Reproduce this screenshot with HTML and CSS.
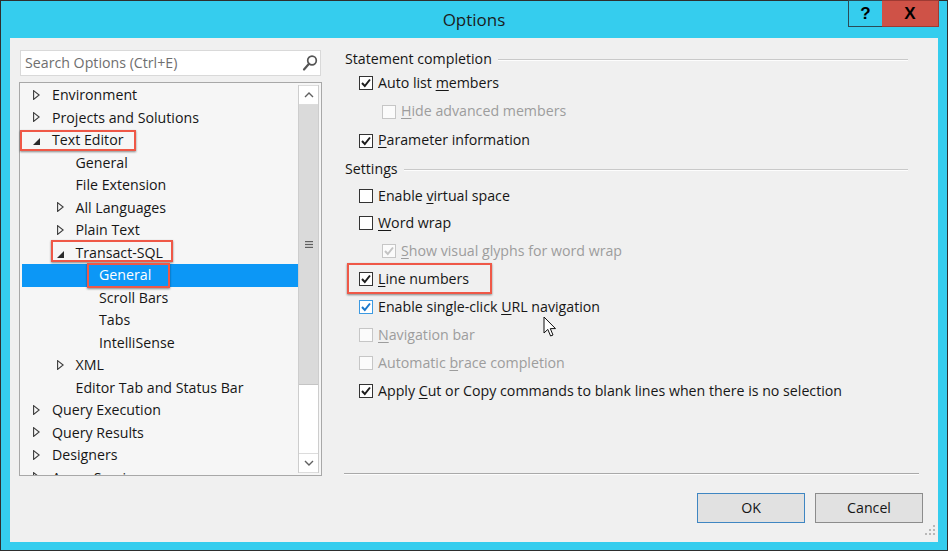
FILE: index.html
```html
<!DOCTYPE html>
<html>
<head>
<meta charset="utf-8">
<link rel="stylesheet" href="styles.css">
</head>
<body>
<div class="window">
  <div class="titlebar">
    <div></div>
    <div class="title">Options</div>
    <div class="controls">
      <div class="tbtn help">?</div>
      <div class="tbtn close">X</div>
    </div>
  </div>
  <div class="client">
    <div class="main">
      <div class="left">
        <div class="search">
          <span class="placeholder">Search Options (Ctrl+E)</span>
          <svg class="mag" width="16" height="18" viewBox="0 0 16 18"><circle cx="10" cy="6.5" r="4.3" fill="none" stroke="#555" stroke-width="1.7"/><line x1="7" y1="9.8" x2="2" y2="15.5" stroke="#555" stroke-width="2.2" stroke-linecap="round"/></svg>
        </div>
        <div class="tree">
          <div class="items">
            <div class="row l0"><span class="arr"><svg width="7" height="10" viewBox="0 0 7 10"><polygon points="0.6,0.6 6.2,5 0.6,9.4" fill="none" stroke="#3a3a3a" stroke-width="1.1"/></svg></span><span>Environment</span></div>
            <div class="row l0"><span class="arr"><svg width="7" height="10" viewBox="0 0 7 10"><polygon points="0.6,0.6 6.2,5 0.6,9.4" fill="none" stroke="#3a3a3a" stroke-width="1.1"/></svg></span><span>Projects and Solutions</span></div>
            <div class="row l0"><span class="arr open"><svg width="7" height="7" viewBox="0 0 7 7"><polygon points="7,0 7,7 0,7" fill="#2a2a2a"/></svg></span><span>Text Editor</span></div>
            <div class="row l1"><span class="arr"></span><span>General</span></div>
            <div class="row l1"><span class="arr"></span><span>File Extension</span></div>
            <div class="row l1"><span class="arr"><svg width="7" height="10" viewBox="0 0 7 10"><polygon points="0.6,0.6 6.2,5 0.6,9.4" fill="none" stroke="#3a3a3a" stroke-width="1.1"/></svg></span><span>All Languages</span></div>
            <div class="row l1"><span class="arr"><svg width="7" height="10" viewBox="0 0 7 10"><polygon points="0.6,0.6 6.2,5 0.6,9.4" fill="none" stroke="#3a3a3a" stroke-width="1.1"/></svg></span><span>Plain Text</span></div>
            <div class="row l1"><span class="arr open"><svg width="7" height="7" viewBox="0 0 7 7"><polygon points="7,0 7,7 0,7" fill="#2a2a2a"/></svg></span><span>Transact-SQL</span></div>
            <div class="row l2 selected"><span class="arr"></span><span>General</span></div>
            <div class="row l2"><span class="arr"></span><span>Scroll Bars</span></div>
            <div class="row l2"><span class="arr"></span><span>Tabs</span></div>
            <div class="row l2"><span class="arr"></span><span>IntelliSense</span></div>
            <div class="row l1"><span class="arr"><svg width="7" height="10" viewBox="0 0 7 10"><polygon points="0.6,0.6 6.2,5 0.6,9.4" fill="none" stroke="#3a3a3a" stroke-width="1.1"/></svg></span><span>XML</span></div>
            <div class="row l1"><span class="arr"></span><span>Editor Tab and Status Bar</span></div>
            <div class="row l0"><span class="arr"><svg width="7" height="10" viewBox="0 0 7 10"><polygon points="0.6,0.6 6.2,5 0.6,9.4" fill="none" stroke="#3a3a3a" stroke-width="1.1"/></svg></span><span>Query Execution</span></div>
            <div class="row l0"><span class="arr"><svg width="7" height="10" viewBox="0 0 7 10"><polygon points="0.6,0.6 6.2,5 0.6,9.4" fill="none" stroke="#3a3a3a" stroke-width="1.1"/></svg></span><span>Query Results</span></div>
            <div class="row l0"><span class="arr"><svg width="7" height="10" viewBox="0 0 7 10"><polygon points="0.6,0.6 6.2,5 0.6,9.4" fill="none" stroke="#3a3a3a" stroke-width="1.1"/></svg></span><span>Designers</span></div>
            <div class="row l0"><span class="arr"><svg width="7" height="10" viewBox="0 0 7 10"><polygon points="0.6,0.6 6.2,5 0.6,9.4" fill="none" stroke="#3a3a3a" stroke-width="1.1"/></svg></span><span>Azure Services</span></div>
          </div>
          <div class="scrollbar">
            <div class="sbtn"><svg width="10" height="6" viewBox="0 0 10 6"><polyline points="1,5 5,1 9,5" fill="none" stroke="#606060" stroke-width="1.4"/></svg></div>
            <div class="thumb"><svg width="8" height="7" viewBox="0 0 8 7"><rect x="0" y="0" width="8" height="1.2" fill="#606060"/><rect x="0" y="2.9" width="8" height="1.2" fill="#606060"/><rect x="0" y="5.8" width="8" height="1.2" fill="#606060"/></svg></div>
            <div class="track"></div>
            <div class="sbtn"><svg width="10" height="6" viewBox="0 0 10 6"><polyline points="1,1 5,5 9,1" fill="none" stroke="#606060" stroke-width="1.4"/></svg></div>
          </div>
        </div>
      </div>
      <div class="right">
        <div class="group g1"><span>Statement completion</span><div class="gline"></div></div>
        <div class="opt h28"><span class="cb"><svg width="12" height="12" viewBox="0 0 12 12"><polyline points="2,6 4.8,9 10,2.5" fill="none" stroke="#1e1e1e" stroke-width="2"/></svg></span><span class="lbl">Auto list <u>m</u>embers</span></div>
        <div class="opt sub dis h29"><span class="cb"></span><span class="lbl"><u>H</u>ide advanced members</span></div>
        <div class="opt h29"><span class="cb"><svg width="12" height="12" viewBox="0 0 12 12"><polyline points="2,6 4.8,9 10,2.5" fill="none" stroke="#1e1e1e" stroke-width="2"/></svg></span><span class="lbl"><u>P</u>arameter information</span></div>
        <div class="group g2"><span>Settings</span><div class="gline"></div></div>
        <div class="opt h26"><span class="cb"></span><span class="lbl">Enable <u>v</u>irtual space</span></div>
        <div class="opt h28"><span class="cb"></span><span class="lbl"><u>W</u>ord wrap</span></div>
        <div class="opt sub dis h28"><span class="cb"><svg width="12" height="12" viewBox="0 0 12 12"><polyline points="2,6 4.8,9 10,2.5" fill="none" stroke="#c4c4c4" stroke-width="2"/></svg></span><span class="lbl"><u>S</u>how visual glyphs for word wrap</span></div>
        <div class="opt h28"><span class="cb"><svg width="12" height="12" viewBox="0 0 12 12"><polyline points="2,6 4.8,9 10,2.5" fill="none" stroke="#1e1e1e" stroke-width="2"/></svg></span><span class="lbl"><u>L</u>ine numbers</span></div>
        <div class="opt h28"><span class="cb hover"><svg width="12" height="12" viewBox="0 0 12 12"><polyline points="2,6 4.8,9 10,2.5" fill="none" stroke="#1b78cc" stroke-width="2"/></svg></span><span class="lbl">Enable single-click <u>U</u>RL navigation</span></div>
        <div class="opt dis h28"><span class="cb"></span><span class="lbl"><u>N</u>avigation bar</span></div>
        <div class="opt dis h28"><span class="cb"></span><span class="lbl">Automatic <u>b</u>race completion</span></div>
        <div class="opt h28"><span class="cb"><svg width="12" height="12" viewBox="0 0 12 12"><polyline points="2,6 4.8,9 10,2.5" fill="none" stroke="#1e1e1e" stroke-width="2"/></svg></span><span class="lbl">Apply <u>C</u>ut or Copy commands to blank lines when there is no selection</span></div>
      </div>
    </div>
    <div class="footer">
      <div class="sep"></div>
      <div class="buttons">
        <div class="btn default">OK</div>
        <div class="btn">Cancel</div>
      </div>
    </div>

    <div class="mark m-texteditor"></div>
    <div class="mark m-tsql"></div>
    <div class="mark m-general"></div>
    <div class="mark m-line"></div>

    <svg class="grip" width="11" height="12" viewBox="0 0 11 12">
      <rect x="8" y="1" width="2" height="2" fill="#b8b8b8"/>
      <rect x="8" y="5" width="2" height="2" fill="#b8b8b8"/>
      <rect x="4" y="5" width="2" height="2" fill="#b8b8b8"/>
      <rect x="8" y="9" width="2" height="2" fill="#b8b8b8"/>
      <rect x="4" y="9" width="2" height="2" fill="#b8b8b8"/>
      <rect x="0" y="9" width="2" height="2" fill="#b8b8b8"/>
    </svg>

    <svg class="cursor" width="14" height="22" viewBox="0 0 14 22">
      <path d="M1,1 L1,17 L4.8,13.4 L7.6,20 L10,19 L7.3,12.6 L12.5,12.6 Z" fill="#fff" stroke="#111" stroke-width="1" stroke-linejoin="round"/>
    </svg>
  </div>
</div>
</body>
</html>
```
FILE: styles.css
```css
* { box-sizing: border-box; }
html, body { margin: 0; padding: 0; }
body {
  width: 948px;
  height: 551px;
  overflow: hidden;
  font-family: "Open Sans", "Noto Sans", "Liberation Sans", sans-serif;
  font-size: 14.2px;
  color: #161616;
}
.window {
  width: 948px;
  height: 551px;
  border: 1px solid #2e2e2e;
  background: #35cdee;
  display: flex;
  flex-direction: column;
}
.titlebar {
  height: 37px;
  display: grid;
  grid-template-columns: 1fr auto 1fr;
  align-items: start;
}
.title {
  line-height: 38px;
  font-size: 17px;
  color: #1c1c1c;
}
.controls {
  justify-self: end;
  display: flex;
  margin-right: 8px;
  margin-top: -1px;
}
.tbtn {
  height: 27px;
  display: flex;
  align-items: center;
  justify-content: center;
  font-family: "Liberation Sans", "DejaVu Sans", sans-serif;
  font-weight: bold;
  font-size: 17px;
  color: #000;
}
.help {
  width: 34px;
  border: 1px solid #2a4a55;
  border-right: none;
}
.close {
  width: 57px;
  background: #cf5247;
  border: 1px solid #9e3a33;
  border-left: none;
}
.client {
  position: relative;
  margin: 0 9px;
  height: 504px;
  background: #f0f0f0;
  display: flex;
  flex-direction: column;
}
.main {
  display: flex;
  height: 435px;
}
.left {
  width: 312px;
  padding: 12px 0 0 9px;
}
.search {
  margin-left: 1px;
  width: 301px;
  height: 26px;
  background: #fff;
  border: 1px solid #d9d9d9;
  display: flex;
  align-items: center;
  justify-content: space-between;
  padding: 0 2px 1px 4px;
  margin-bottom: 6px;
}
.placeholder { color: #6f6f6f; }
.tree {
  width: 303px;
  height: 394px;
  border: 1px solid #a8a8a8;
  background: #f6f6f6;
  display: flex;
  overflow: hidden;
}
.items {
  flex: 1;
  padding: 1px 0 0 2px;
  overflow: hidden;
}
.row {
  height: 22.5px;
  display: flex;
  align-items: center;
  white-space: nowrap;
  padding-bottom: 1px;
}
.row.l0 { padding-left: 11px; }
.row.l1 { padding-left: 34.5px; }
.row.l2 { padding-left: 58px; }
.row.selected {
  background: #0c97f6;
  color: #fff;
}
.arr {
  width: 19px;
  flex: none;
  display: flex;
  align-items: center;
}
.arr.open { padding-top: 4px; }
.scrollbar {
  width: 21px;
  margin: 2px 2px 2px 0;
  display: flex;
  flex-direction: column;
  background: #fff;
  border-left: 1px solid #cdcdcd;
  border-right: 1px solid #cdcdcd;
}
.sbtn {
  height: 20px;
  display: flex;
  align-items: center;
  justify-content: center;
  background: #fff;
  border-top: 1px solid #dcdcdc;
  border-bottom: 1px solid #dcdcdc;
}
.thumb {
  height: 280px;
  background: #dadada;
  border-bottom: 1px solid #c4c4c4;
  display: flex;
  align-items: center;
  justify-content: center;
}
.track { flex: 1; background: #fff; }

.right {
  margin-left: 22px;
  width: 564px;
  padding-top: 11px;
}
.group {
  display: flex;
  align-items: center;
  padding-left: 1px;
  padding-bottom: 1px;
}
.group.g1 { height: 20px; }
.group.g2 { height: 28px; }
.gline {
  flex: 1;
  height: 2px;
  margin-left: 6px;
  margin-top: 2px;
  border-top: 1px solid #c9c9c9;
  border-bottom: 1px solid #fdfdfd;
}
.opt {
  display: flex;
  align-items: center;
  padding-left: 15px;
  white-space: nowrap;
}
.lbl { padding-bottom: 2px; }
.opt.sub { padding-left: 38px; }
.h26 { height: 26px; }
.h28 { height: 28px; }
.h29 { height: 29px; }
.opt.dis { color: #9d9d9d; }
u {
  text-decoration-thickness: 1px;
  text-underline-offset: 2px;
}
.cb {
  width: 14px;
  height: 14px;
  flex: none;
  border: 1px solid #333;
  background: #fff;
  margin-right: 5px;
  display: flex;
  align-items: center;
  justify-content: center;
}
.opt.dis .cb {
  border-color: #c6c6c6;
  background: #fbfbfb;
}
.cb.hover { border-color: #3c9ae2; }

.footer { flex: 1; }
.sep {
  margin-left: 334px;
  width: 575px;
  height: 2px;
  border-top: 1px solid #a9a9a9;
  border-bottom: 1px solid #fcfcfc;
}
.buttons {
  display: flex;
  justify-content: flex-end;
  gap: 10px;
  padding-right: 15px;
  margin-top: 18px;
}
.btn {
  width: 108px;
  height: 30px;
  background: #e1e1e1;
  border: 1px solid #8c8c8c;
  display: flex;
  align-items: center;
  justify-content: center;
  padding-bottom: 1px;
}
.btn.default { border-color: #3f86c2; }

.mark {
  position: absolute;
  border: 2px solid #ef5847;
  box-shadow: 0 1px 2px rgba(0, 0, 0, 0.45);
}
.m-texteditor { left: 10px; top: 92px; width: 116px; height: 21px; }
.m-tsql { left: 41px; top: 202px; width: 122px; height: 22px; }
.m-general { left: 77px; top: 225px; width: 83px; height: 25px; }
.m-line { left: 337px; top: 225px; width: 145px; height: 31px; }

.grip { position: absolute; left: 915px; top: 486px; }
.cursor { position: absolute; left: 533px; top: 278px; }
```
